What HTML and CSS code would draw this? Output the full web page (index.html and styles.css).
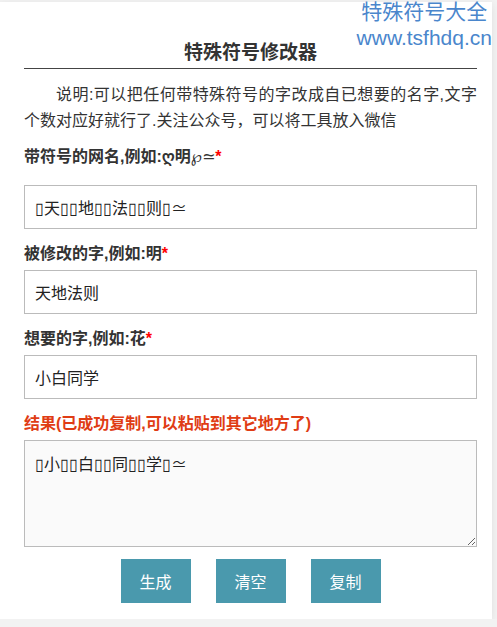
FILE: index.html
```html
<!DOCTYPE html>
<html lang="zh-CN">

<head>
    <meta charset="UTF-8">
    <meta name="viewport" content="width=device-width, initial-scale=1.0">
    <title>特殊符号修改器</title>
    <link rel="stylesheet" href="styles.css">
</head>

<body>

    <div class="card">
        <div class="brand">
            <div class="brand-name">特殊符号大全</div>
            <div class="brand-url">www.tsfhdq.cn</div>
        </div>

        <h2 class="title">特殊符号修改器</h2>
        <p class="intro">说明:可以把任何带特殊符号的字改成自已想要的名字,文字个数对应好就行了.关注公众号，可以将工具放入微信</p>

        <div class="field field-first">
            <label>带符号的网名,例如:ღ明<span class="deco">℘≃</span><span class="req">*</span></label>
            <input type="text" value="▯天▯▯地▯▯法▯▯则▯≃">
        </div>

        <div class="field">
            <label>被修改的字,例如:明<span class="req">*</span></label>
            <input type="text" value="天地法则">
        </div>

        <div class="field">
            <label>想要的字,例如:花<span class="req">*</span></label>
            <input type="text" value="小白同学">
        </div>

        <div class="field">
            <label class="result-label">结果(已成功复制,可以粘贴到其它地方了)</label>
            <textarea>▯小▯▯白▯▯同▯▯学▯≃</textarea>
        </div>

        <div class="actions">
            <button class="btn">生成</button>
            <button class="btn">清空</button>
            <button class="btn">复制</button>
        </div>
    </div>

</body>

</html>
```

FILE: styles.css
```css
body {
    margin: 0;
    padding-top: 2px;
    background: #f2f2f2;
    font-family: "Liberation Sans", "Noto Sans CJK SC", sans-serif;
    color: #333;
}

.card {
    position: relative;
    width: 492px;
    height: 617px;
    box-sizing: border-box;
    padding: 36px 15px 15px 24px;
    background: #fff;
    box-shadow: 0 2px 8px rgba(0, 0, 0, 0.08);
}

.brand {
    position: absolute;
    top: -2px;
    right: 0;
    text-align: center;
    color: #4a86cc;
}

.brand-name {
    font-size: 21px;
    line-height: 24px;
}

.brand-url {
    margin-top: 2px;
    font-size: 21px;
    line-height: 24px;
}

.title {
    margin: 0;
    font-size: 19px;
    line-height: 30px;
    text-align: center;
    border-bottom: 1px solid #444;
}

.intro {
    margin: 13px 0 0;
    font-size: 16px;
    line-height: 26px;
    text-indent: 2em;
    text-align: justify;
}

.field {
    margin-top: 13px;
}

.field label {
    display: block;
    margin-bottom: 4px;
    font-size: 16px;
    font-weight: bold;
    line-height: 24px;
}

.field-first {
    margin-top: 11px;
}

.field-first label {
    margin-bottom: 16px;
}

.deco {
    font-weight: normal;
    font-family: "DejaVu Sans", sans-serif;
}

.req {
    color: #f00;
}

.result-label {
    color: #e03c14;
}

.field input,
.field textarea {
    display: block;
    width: 100%;
    box-sizing: border-box;
    border: 1px solid #bbb;
    font-family: inherit;
    font-size: 16px;
    color: #222;
    outline: none;
}

.field input {
    height: 44px;
    padding: 0 10px;
}

.field textarea {
    height: 107px;
    padding: 10px;
    background: #fafafa;
}

.actions {
    display: flex;
    justify-content: center;
    gap: 25px;
    margin-top: 12px;
}

.btn {
    width: 70px;
    height: 44px;
    border: none;
    background: #4a99ad;
    color: #fff;
    font-family: inherit;
    font-size: 16px;
    cursor: pointer;
}
```
